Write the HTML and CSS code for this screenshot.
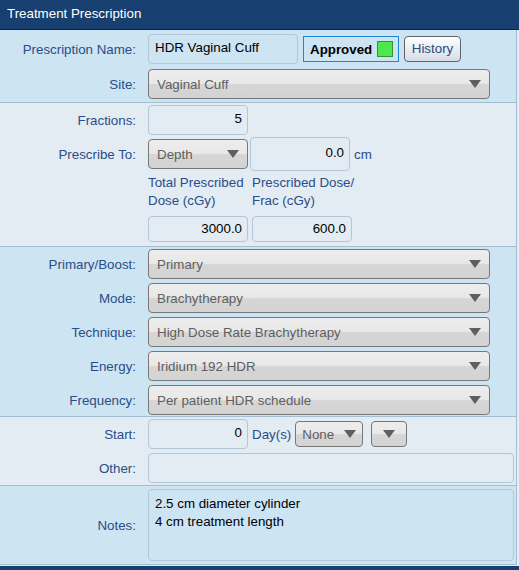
FILE: index.html
```html
<!DOCTYPE html>
<html>
<head>
<meta charset="utf-8">
<link rel="stylesheet" href="styles.css">
</head>
<body>
<div class="header">Treatment Prescription</div>
<div class="panel">
  <section class="sec blue s1">
    <div class="row">
      <label class="lbl">Prescription Name:</label>
      <div class="inp name">HDR Vaginal Cuff</div>
      <div class="approved">Approved <span class="sq"></span></div>
      <div class="btn">History</div>
    </div>
    <div class="row">
      <label class="lbl">Site:</label>
      <div class="sel wide"><span>Vaginal Cuff</span><i class="arr"></i></div>
    </div>
  </section>
  <section class="sec grey s2">
    <div class="row">
      <label class="lbl">Fractions:</label>
      <div class="inp num w100">5</div>
    </div>
    <div class="row r34">
      <label class="lbl">Prescribe To:</label>
      <div class="sel w100"><span>Depth</span><i class="arr"></i></div>
      <div class="inp num w100 h34">0.0</div>
      <span class="unit">cm</span>
    </div>
    <div class="row sub">
      <span class="lbl"></span>
      <div class="subl">Total Prescribed<br>Dose (cGy)</div>
      <div class="subl">Prescribed Dose/<br>Frac (cGy)</div>
    </div>
    <div class="row dose">
      <span class="lbl"></span>
      <div class="inp num w100 h26">3000.0</div>
      <div class="inp num w100 h26">600.0</div>
    </div>
  </section>
  <section class="sec blue s3">
    <div class="row"><label class="lbl">Primary/Boost:</label><div class="sel wide"><span>Primary</span><i class="arr"></i></div></div>
    <div class="row"><label class="lbl">Mode:</label><div class="sel wide"><span>Brachytherapy</span><i class="arr"></i></div></div>
    <div class="row"><label class="lbl">Technique:</label><div class="sel wide"><span>High Dose Rate Brachytherapy</span><i class="arr"></i></div></div>
    <div class="row"><label class="lbl">Energy:</label><div class="sel wide"><span>Iridium 192 HDR</span><i class="arr"></i></div></div>
    <div class="row"><label class="lbl">Frequency:</label><div class="sel wide"><span>Per patient HDR schedule</span><i class="arr"></i></div></div>
  </section>
  <section class="sec grey s4">
    <div class="row">
      <label class="lbl">Start:</label>
      <div class="inp num w100">0</div>
      <span class="unit days">Day(s)</span>
      <div class="sel small none"><span>None</span><i class="arr"></i></div>
      <div class="sel small empty"><i class="arr"></i></div>
    </div>
    <div class="row">
      <label class="lbl">Other:</label>
      <div class="inp full"></div>
    </div>
  </section>
  <section class="sec blue s5">
    <div class="row">
      <label class="lbl">Notes:</label>
      <div class="inp full notes">2.5 cm diameter cylinder<br>4 cm treatment length</div>
    </div>
  </section>
</div>
<div class="footer"></div>
</body>
</html>
```
FILE: styles.css
```css
* { box-sizing: border-box; }
html, body { margin: 0; padding: 0; }
body {
  width: 519px;
  height: 570px;
  overflow: hidden;
  background: #e6edf3;
  font-family: "Liberation Sans", Arial, sans-serif;
  font-size: 13.33px;
  color: #000;
}
.header {
  height: 30px;
  background: #173f6f;
  border-bottom: 1px solid #0c2546;
  color: #fff;
  padding-left: 7px;
  line-height: 28px;
  font-size: 13.33px;
}
.panel {
  width: 517px;
  border-right: 1px solid #a5bdd1;
}
.sec {
  display: flex;
  flex-direction: column;
  border-bottom: 1px solid #a3bdd3;
}
.blue { background: #cde4f3; }
.grey { background: #e3ebf3; }
.s1 { padding: 4px 0 3px; gap: 5px; }
.s2 { padding: 2px 0 4px; gap: 2px; }
.s3 { padding: 2px 0 1px; gap: 4px; }
.s4 { padding: 2px 0 2px; gap: 4px; }
.s5 { padding: 3px 0 3px; }
.row {
  display: flex;
  align-items: center;
  min-height: 30px;
}
.lbl {
  width: 136px;
  flex: none;
  text-align: right;
  color: #2b4d86;
  margin-right: 12px;
}
.inp {
  height: 30px;
  border: 1px solid #b3c7d8;
  border-radius: 4px;
  padding: 0 6px;
  line-height: 26px;
  white-space: nowrap;
}
.num { text-align: right; padding-right: 5px; }
.w100 { width: 100px; }
.h34 { height: 34px; line-height: 30px; margin-left: 2px; }
.h26 { height: 26px; line-height: 24px; }
.name { width: 150px; padding-left: 6px; }
.approved {
  margin-left: 5px;
  width: 96px;
  height: 26px;
  border: 1px solid #1f86d6;
  font-weight: bold;
  display: flex;
  align-items: center;
  padding-left: 6px;
  gap: 5px;
}
.sq {
  width: 16px;
  height: 16px;
  background: #4ee84e;
  border: 1px solid #34923a;
}
.btn {
  margin-left: 5px;
  width: 57px;
  height: 26px;
  border: 1px solid #5d6470;
  border-radius: 4px;
  background: linear-gradient(#ffffff, #e9edf4 50%, #d6dce8);
  color: #2b4b7b;
  text-align: center;
  line-height: 24px;
}
.sel {
  height: 30px;
  border: 1px solid #777;
  border-radius: 4px;
  background: linear-gradient(#ededed 0, #e8e8e8 48%, #d6d6d6 52%, #d3d3d3 100%);
  color: #5f5f5f;
  display: flex;
  align-items: center;
  justify-content: space-between;
  padding: 0 8px 0 8px;
  white-space: nowrap;
}
.wide { width: 342px; }
.arr {
  width: 0;
  height: 0;
  border-left: 6px solid transparent;
  border-right: 6px solid transparent;
  border-top: 8px solid #5f5f5f;
  flex: none;
}
.unit { color: #2b4d86; margin-left: 4px; }
.r34 { min-height: 34px; }
.sub { align-items: flex-start; min-height: 36px; }
.subl {
  color: #2b4d86;
  line-height: 18px;
  width: 104px;
  padding-top: 1px;
  white-space: nowrap;
}
.dose { min-height: 26px; margin-top: 4px; gap: 4px; }
.dose .lbl { margin-right: 8px; }
.small { height: 26px; padding: 0 6px; }
.none { width: 68px; margin-left: 4px; }
.empty { width: 36px; margin-left: 8px; justify-content: center; }
.days { margin-left: 4px; }
.full { width: 366px; }
.notes {
  height: 72px;
  line-height: 18px;
  padding: 5px 6px;
}
.footer {
  height: 6px;
  background: #173f6f;
  border-top: 1px solid #e0eaf2;
}
```
